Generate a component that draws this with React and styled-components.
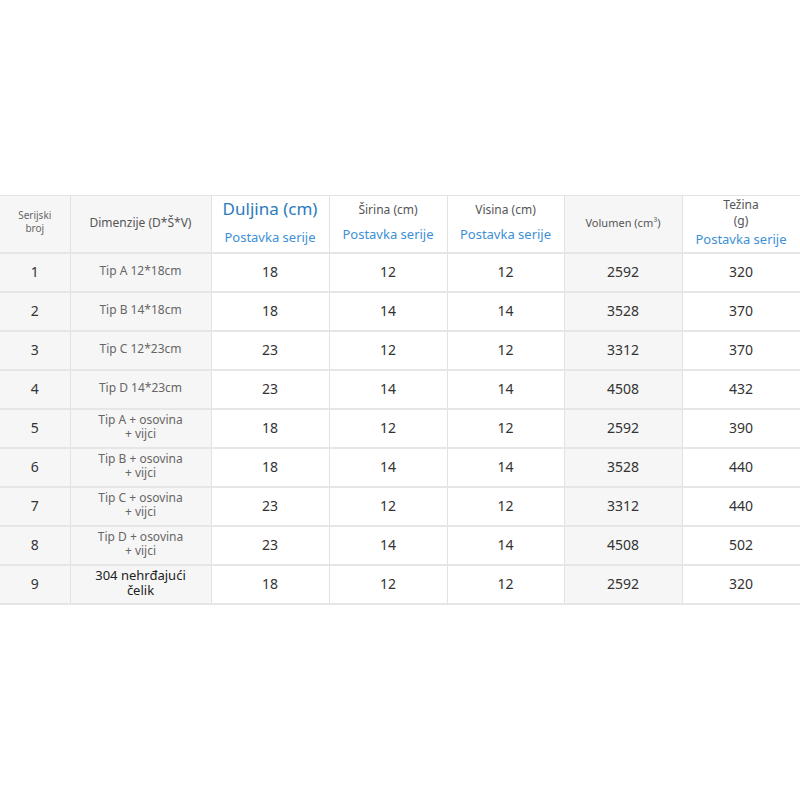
import styled, { createGlobalStyle } from "styled-components";

const GlobalStyle = createGlobalStyle`
  html, body {
    margin: 0;
    padding: 0;
    background: #ffffff;
    font-family: "Noto Sans", "Open Sans", sans-serif;
  }
`;

const rows = [
  ["1", "Tip A 12*18cm", "18", "12", "12", "2592", "320"],
  ["2", "Tip B 14*18cm", "18", "14", "14", "3528", "370"],
  ["3", "Tip C 12*23cm", "23", "12", "12", "3312", "370"],
  ["4", "Tip D 14*23cm", "23", "14", "14", "4508", "432"],
  ["5", "Tip A + osovina\n+ vijci", "18", "12", "12", "2592", "390"],
  ["6", "Tip B + osovina\n+ vijci", "18", "14", "14", "3528", "440"],
  ["7", "Tip C + osovina\n+ vijci", "23", "12", "12", "3312", "440"],
  ["8", "Tip D + osovina\n+ vijci", "23", "14", "14", "4508", "502"],
  ["9", "304 nehrđajući\nčelik", "18", "12", "12", "2592", "320"],
];

const widths = [70, 141, 118, 118, 117, 118, 118];
const greyCols = [0, 1, 5];

export default function App() {
  return (
    <>
      <GlobalStyle />
      <Page>
        <Table>
          <colgroup>
            {widths.map((w, i) => (
              <col key={i} style={{ width: w }} />
            ))}
          </colgroup>
          <thead>
            <tr>
              <HeadCell $grey>
                <SmallLabel>Serijski<br />broj</SmallLabel>
              </HeadCell>
              <HeadCell $grey>
                <Label>Dimenzije (D*Š*V)</Label>
              </HeadCell>
              <HeadCell>
                <BigTitle>Duljina (cm)</BigTitle>
                <Series>Postavka serije</Series>
              </HeadCell>
              <HeadCell>
                <Label>Širina (cm)</Label>
                <Series>Postavka serije</Series>
              </HeadCell>
              <HeadCell>
                <Label>Visina (cm)</Label>
                <Series>Postavka serije</Series>
              </HeadCell>
              <HeadCell $grey>
                <Label $small>
                  Volumen (cm<sup>3</sup>)
                </Label>
              </HeadCell>
              <HeadCell>
                <Label $tight>Težina<br />(g)</Label>
                <Series $tight>Postavka serije</Series>
              </HeadCell>
            </tr>
          </thead>
          <tbody>
            {rows.map((r) => (
              <tr key={r[0]}>
                {r.map((v, i) => (
                  <Cell key={i} $grey={greyCols.includes(i)}>
                    {i === 1 ? (
                      <Dim $strong={r[0] === "9"}>{v}</Dim>
                    ) : (
                      <Num>{v}</Num>
                    )}
                  </Cell>
                ))}
              </tr>
            ))}
          </tbody>
        </Table>
      </Page>
    </>
  );
}

const Page = styled.div`
  width: 800px;
  padding-top: 195px;
`;

const Table = styled.table`
  width: 800px;
  table-layout: fixed;
  border-collapse: collapse;
  border-top: 1px solid #e2e2e2;
  border-right: 1px solid #e2e2e2;
`;

const HeadCell = styled.th`
  height: 52px;
  padding: 0 0 4px;
  text-align: center;
  vertical-align: middle;
  font-weight: 400;
  background: ${(p) => (p.$grey ? "#f6f6f6" : "#ffffff")};
  border-left: 1px solid #e2e2e2;
  border-bottom: 2px solid #e6e6e6;

  &:first-child {
    border-left: none;
  }
`;

const Cell = styled.td`
  height: 34px;
  padding: 0 0 3px;
  text-align: center;
  vertical-align: middle;
  background: ${(p) => (p.$grey ? "#f6f6f6" : "#ffffff")};
  border-left: 1px solid #e2e2e2;
  border-bottom: 2px solid #e6e6e6;

  &:first-child {
    border-left: none;
  }
`;

const SmallLabel = styled.div`
  font-size: 10px;
  line-height: 13px;
  color: #666666;
`;

const Label = styled.div`
  font-size: ${(p) => (p.$small ? "11px" : "12px")};
  line-height: ${(p) => (p.$tight ? "16px" : "15px")};
  color: #555555;

  sup {
    font-size: 7px;
    line-height: 0;
    vertical-align: 5px;
  }
`;

const BigTitle = styled.div`
  font-size: 17px;
  line-height: 22px;
  color: #2c7bbd;
`;

const Series = styled.div`
  margin-top: ${(p) => (p.$tight ? "2px" : "9px")};
  font-size: 13px;
  line-height: 17px;
  color: #3d8fd6;
`;

const Num = styled.span`
  font-size: 14px;
  color: #333333;
`;

const Dim = styled.div`
  white-space: pre-line;
  font-size: ${(p) => (p.$strong ? "13px" : "12px")};
  line-height: ${(p) => (p.$strong ? "15px" : "14px")};
  color: ${(p) => (p.$strong ? "#222222" : "#666666")};
`;
